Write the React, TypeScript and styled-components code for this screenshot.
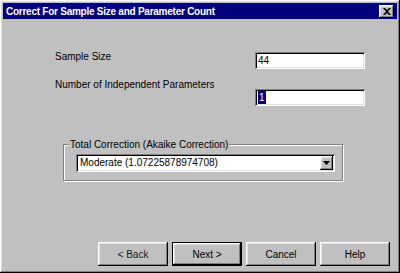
import React from "react";
import styled, { createGlobalStyle } from "styled-components";

const GlobalStyle = createGlobalStyle`
	html, body {
		margin: 0;
		padding: 0;
		background: #c0c0c0;
	}
	body {
		font-family: "Liberation Sans", Arial, sans-serif;
		font-size: 10px;
		color: #000;
	}
`;

const raised = `
	inset -1px -1px #000,
	inset 1px 1px #fff,
	inset -2px -2px #808080,
	inset 2px 2px #dfdfdf
`;

const sunken = `
	inset 1px 1px #808080,
	inset -1px -1px #fff,
	inset 2px 2px #000,
	inset -2px -2px #dfdfdf
`;

const Window = styled.div`
	width: 400px;
	height: 273px;
	box-sizing: border-box;
	padding: 3px;
	display: flex;
	flex-direction: column;
	background: #c0c0c0;
	box-shadow: ${raised};
`;

const TitleBar = styled.div`
	height: 16px;
	display: flex;
	align-items: center;
	justify-content: space-between;
	padding: 0 3px 0 3px;
	background: #000080;
	color: #fff;
	font-weight: bold;
	font-size: 10px;
	letter-spacing: -0.25px;
`;

const CloseButton = styled.div`
	width: 15px;
	height: 13px;
	display: flex;
	align-items: center;
	justify-content: center;
	background: #c0c0c0;
	box-shadow: ${raised};
`;

const Fields = styled.div`
	display: grid;
	grid-template-columns: 200px 110px;
	row-gap: 20px;
	margin: 33px 0 0 52px;
`;

const Label = styled.div<{ $offset: number }>`
	line-height: 13px;
	margin-top: ${p => p.$offset}px;
`;

const TextBox = styled.div`
	height: 17px;
	box-sizing: border-box;
	padding: 2px 3px;
	display: flex;
	align-items: center;
	background: #fff;
	box-shadow: ${sunken};
	line-height: 13px;
`;

const Selected = styled.span`
	background: #000080;
	color: #fff;
	padding: 0 1px;
`;

const GroupBox = styled.div`
	margin: 38px 0 0 60px;
	width: 280px;
	box-sizing: border-box;
	border: 1px solid #808080;
	box-shadow: inset 1px 1px #fff, 1px 1px #fff;
	padding: 0 7px 8px 12px;
`;

const GroupLabel = styled.div`
	width: fit-content;
	margin: -7px 0 0 -7px;
	padding: 0 1px;
	line-height: 13px;
	background: #c0c0c0;
`;

const Select = styled.div`
	margin-top: 3px;
	height: 18px;
	box-sizing: border-box;
	padding: 2px;
	display: flex;
	background: #fff;
	box-shadow: ${sunken};
`;

const SelectValue = styled.div`
	flex: 1;
	padding-left: 2px;
	line-height: 14px;
`;

const DropButton = styled.div`
	width: 13px;
	display: flex;
	align-items: center;
	justify-content: center;
	background: #c0c0c0;
	box-shadow: ${raised};
`;

const ButtonRow = styled.div`
	margin-top: auto;
	display: flex;
	justify-content: flex-end;
	gap: 4px;
	padding: 0 7px 4px 0;
`;

const Button = styled.div<{ $default?: boolean; $dim?: boolean }>`
	width: 70px;
	height: 24px;
	box-sizing: border-box;
	display: flex;
	align-items: center;
	justify-content: center;
	background: #c0c0c0;
	color: ${p => (p.$dim ? "#202020" : "#000")};
	border: ${p => (p.$default ? "1px solid #000" : "none")};
	box-shadow: ${raised};
`;

export default function App() {
	return (
		<>
			<GlobalStyle />
			<Window>
				<TitleBar>
					<span>Correct For Sample Size and Parameter Count</span>
					<CloseButton>
						<svg width="8" height="7" viewBox="0 0 8 7">
							<path d="M0 0h2l2 2 2-2h2L5 3.5 8 7H6L4 5 2 7H0l3-3.5z" fill="#000" />
						</svg>
					</CloseButton>
				</TitleBar>
				<Fields>
					<Label $offset={-2}>Sample Size</Label>
					<TextBox>44</TextBox>
					<Label $offset={-11}>Number of Independent Parameters</Label>
					<TextBox>
						<Selected>1</Selected>
					</TextBox>
				</Fields>
				<GroupBox>
					<GroupLabel>Total Correction (Akaike Correction)</GroupLabel>
					<Select>
						<SelectValue>Moderate (1.07225878974708)</SelectValue>
						<DropButton>
							<svg width="7" height="4" viewBox="0 0 7 4">
								<path d="M0 0h7L3.5 4z" fill="#000" />
							</svg>
						</DropButton>
					</Select>
				</GroupBox>
				<ButtonRow>
					<Button $dim>&lt; Back</Button>
					<Button $default>Next &gt;</Button>
					<Button>Cancel</Button>
					<Button>Help</Button>
				</ButtonRow>
			</Window>
		</>
	);
}
